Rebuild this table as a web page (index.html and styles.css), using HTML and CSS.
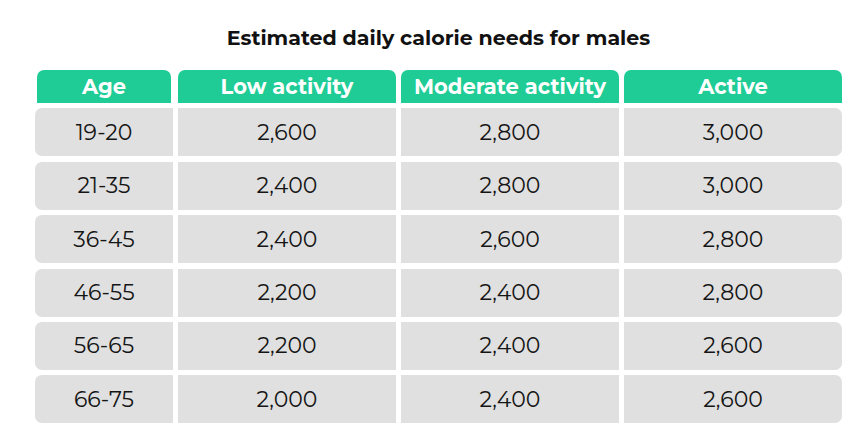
FILE: index.html
```html
<!DOCTYPE html>
<html>
<head>
<meta charset="utf-8">
<link rel="stylesheet" href="styles.css">
</head>
<body>
<div class="page">
  <h1 class="title">Estimated daily calorie needs for males</h1>
  <div class="table">
    <div class="th first">Age</div><div class="th">Low activity</div><div class="th">Moderate activity</div><div class="th last">Active</div>
    <div class="td first">19-20</div><div class="td">2,600</div><div class="td">2,800</div><div class="td last">3,000</div>
    <div class="td first">21-35</div><div class="td">2,400</div><div class="td">2,800</div><div class="td last">3,000</div>
    <div class="td first">36-45</div><div class="td">2,400</div><div class="td">2,600</div><div class="td last">2,800</div>
    <div class="td first">46-55</div><div class="td">2,200</div><div class="td">2,400</div><div class="td last">2,800</div>
    <div class="td first">56-65</div><div class="td">2,200</div><div class="td">2,400</div><div class="td last">2,600</div>
    <div class="td first">66-75</div><div class="td">2,000</div><div class="td">2,400</div><div class="td last">2,600</div>
  </div>
</div>
</body>
</html>
```
FILE: styles.css
```css
html, body {
  margin: 0;
  padding: 0;
  background: #ffffff;
}
.page {
  width: 866px;
  height: 442px;
  padding: 26px 24px 0 35px;
  box-sizing: border-box;
  font-family: "Montserrat", "Open Sans", "Liberation Sans", sans-serif;
}
.title {
  margin: 0 0 21px 0;
  text-align: center;
  font-size: 20.6px;
  line-height: 23px;
  font-weight: 700;
  color: #111111;
}
.table {
  display: grid;
  grid-template-columns: 138px 218px 218px 218px;
  grid-template-rows: 33px repeat(6, 48px);
  column-gap: 5px;
  row-gap: 5.4px;
}
.th {
  background: #20cc96;
  color: #ffffff;
  font-weight: 700;
  font-size: 21px;
  display: flex;
  align-items: center;
  justify-content: center;
  border-radius: 7px 7px 0 0;
}
.th.first { margin: 0 2px; }
.td {
  background: #e0e0e0;
  color: #151515;
  font-size: 22px;
  display: flex;
  align-items: center;
  justify-content: center;
}
.td.first { border-radius: 7px 0 0 7px; }
.td.last { border-radius: 0 7px 7px 0; }
```
